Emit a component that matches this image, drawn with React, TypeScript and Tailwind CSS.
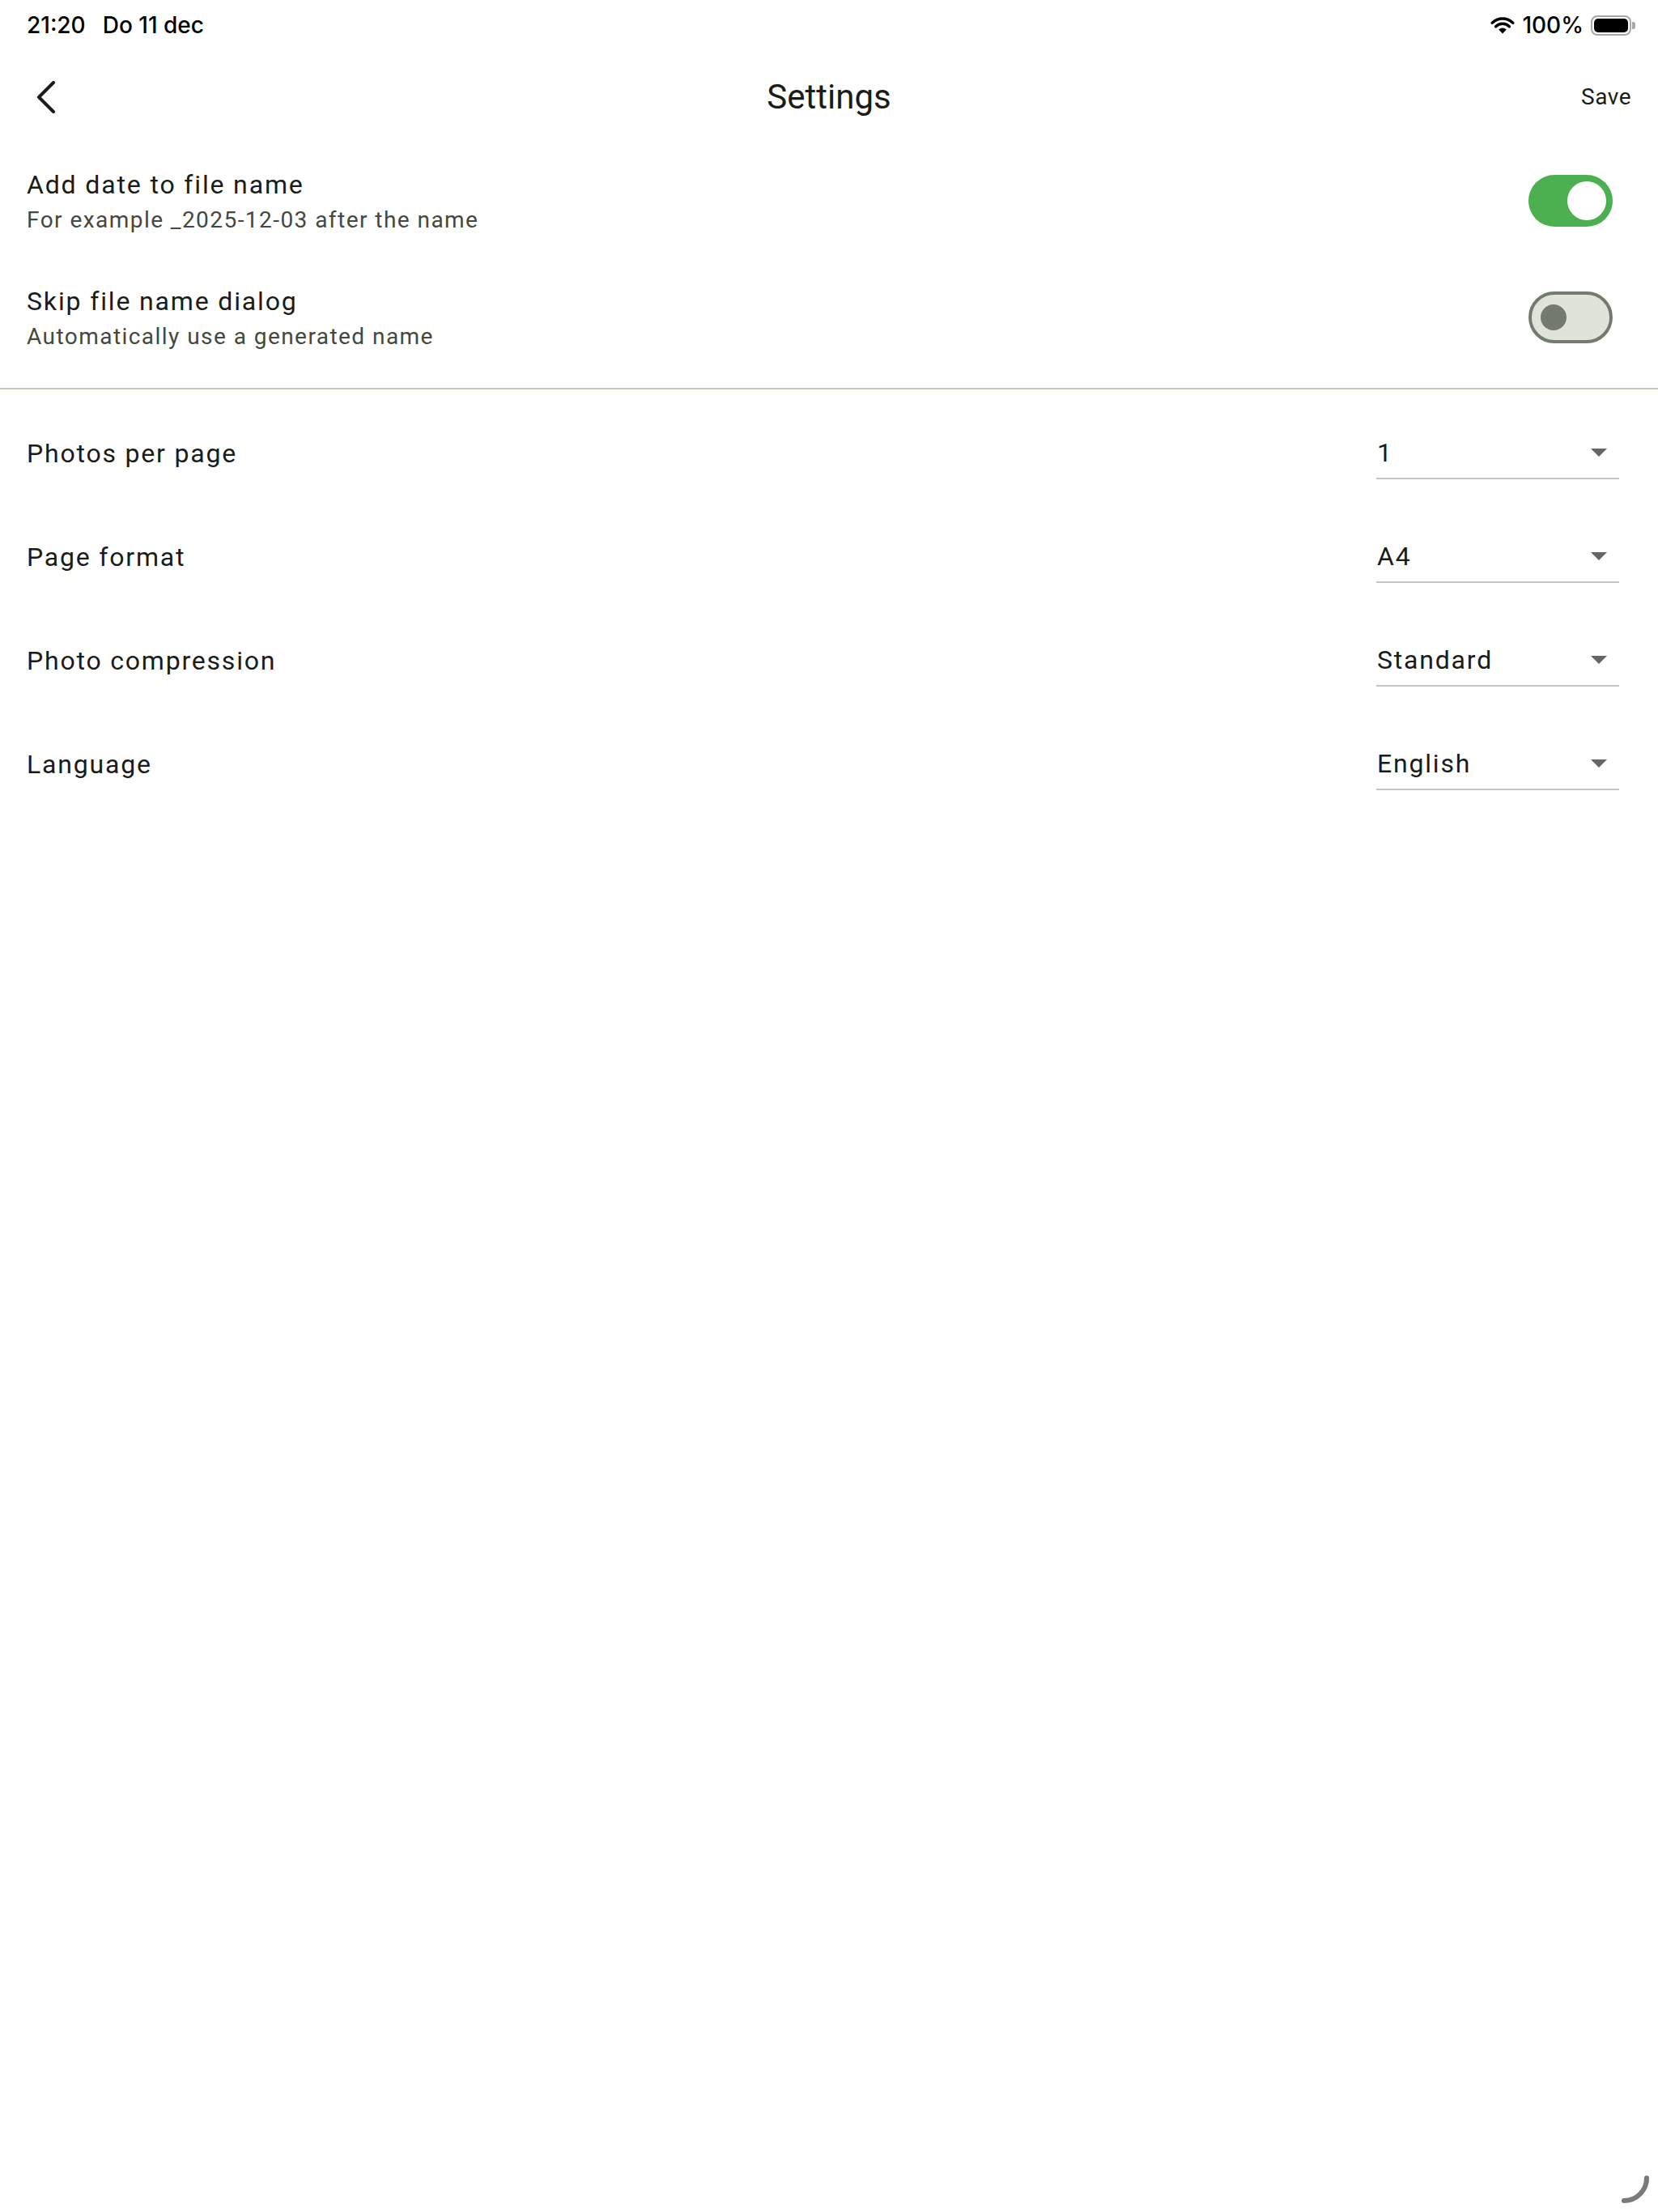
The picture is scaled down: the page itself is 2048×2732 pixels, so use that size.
import React from "react";

function Wifi() {
  return (
    <svg width="30" height="21" viewBox="0 0 30 21" fill="none">
      <path d="M15 20.5 L10.2 15.4 A7 7 0 0 1 19.8 15.4 Z" fill="#000" />
      <path d="M6.6 11.7 A12 12 0 0 1 23.4 11.7" stroke="#000" strokeWidth="3.4" strokeLinecap="round" />
      <path d="M2.2 7.2 A18.2 18.2 0 0 1 27.8 7.2" stroke="#000" strokeWidth="3.4" strokeLinecap="round" />
    </svg>
  );
}

function Battery() {
  return (
    <div className="flex items-center">
      <div className="flex h-[25px] w-[50px] items-center rounded-[8px] border-2 border-[#a8a8a8] p-[2px]">
        <div className="h-full w-full rounded-[5px] bg-black" />
      </div>
      <div className="ml-[1px] h-[9px] w-[4px] rounded-r-[3px] bg-[#a8a8a8]" />
    </div>
  );
}

function Toggle({ on }: { on: boolean }) {
  if (on) {
    return (
      <div className="flex h-[64px] w-[104px] items-center justify-end rounded-full bg-[#4caf50] pr-[8px]">
        <div className="h-[48px] w-[48px] rounded-full bg-white" />
      </div>
    );
  }
  return (
    <div className="flex h-[64px] w-[104px] items-center justify-start rounded-full border-[4px] border-[#737a6f] bg-[#e0e3d9] pl-[11px]">
      <div className="h-[32px] w-[32px] rounded-full bg-[#737a6f]" />
    </div>
  );
}

function SwitchRow({ title, subtitle, on }: { title: string; subtitle: string; on: boolean }) {
  return (
    <div className="flex h-[144px] items-center justify-between pl-[33px] pr-[56px]">
      <div className="flex flex-col">
        <span className="text-[32px] leading-[48px] tracking-[1.85px] text-[#1a1c18]">{title}</span>
        <span className="text-[28px] leading-[40px] tracking-[1.45px] text-[#44483e]">{subtitle}</span>
      </div>
      <Toggle on={on} />
    </div>
  );
}

function DropdownRow({ label, value }: { label: string; value: string }) {
  return (
    <div className="flex h-[128px] items-center justify-between pl-[33px] pr-[48px]">
      <span className="text-[32px] tracking-[1.8px] text-[#1a1c18]">{label}</span>
      <div className="flex h-[64px] w-[300px] items-center justify-between border-b-2 border-[#c4c4c4] pl-[1px] pr-[15px]">
        <span className="text-[32px] tracking-[1.8px] text-[#1a1c18]">{value}</span>
        <div className="h-0 w-0 border-l-[10px] border-r-[10px] border-t-[10px] border-l-transparent border-r-transparent border-t-[#666666]" />
      </div>
    </div>
  );
}

export default function App() {
  return (
    <div className="relative min-h-screen w-full bg-white font-['Roboto',sans-serif]">
      {/* Status bar */}
      <div className="flex h-[64px] items-start justify-between pl-[33px] pr-[28px] pt-[14px] font-['Inter',sans-serif] text-[28px] font-medium leading-[35px] text-black">
        <div className="flex gap-[21px]">
          <span>21:20</span>
          <span>Do 11 dec</span>
        </div>
        <div className="flex items-center gap-[9px]">
          <Wifi />
          <span>100%</span>
          <Battery />
        </div>
      </div>

      {/* App bar */}
      <div className="grid h-[112px] grid-cols-[1fr_auto_1fr] items-center px-[33px]">
        <div className="flex items-center pl-[12px]">
          <svg width="26" height="40" viewBox="0 0 26 40" fill="none">
            <path d="M21 2 L3 20 L21 38" stroke="#1c1c1c" strokeWidth="4" strokeLinecap="round" strokeLinejoin="round" />
          </svg>
        </div>
        <span className="text-[42px] leading-[56px] text-[#1a1c18]">Settings</span>
        <div className="flex justify-end">
          <span className="text-[28px] tracking-[0.5px] text-[#1a1c18]">Save</span>
        </div>
      </div>

      <SwitchRow title="Add date to file name" subtitle="For example _2025-12-03 after the name" on={true} />
      <SwitchRow title="Skip file name dialog" subtitle="Automatically use a generated name" on={false} />

      <div className="my-[15px] h-[2px] w-full bg-[#c4c8bb]" />

      <DropdownRow label="Photos per page" value="1" />
      <DropdownRow label="Page format" value="A4" />
      <DropdownRow label="Photo compression" value="Standard" />
      <DropdownRow label="Language" value="English" />

      <svg className="absolute bottom-[8px] right-[8px]" width="40" height="40" viewBox="0 0 40 40" fill="none">
        <path d="M34 6 A28 28 0 0 1 6 34" stroke="#7a7a7a" strokeWidth="6" strokeLinecap="round" />
      </svg>
    </div>
  );
}
